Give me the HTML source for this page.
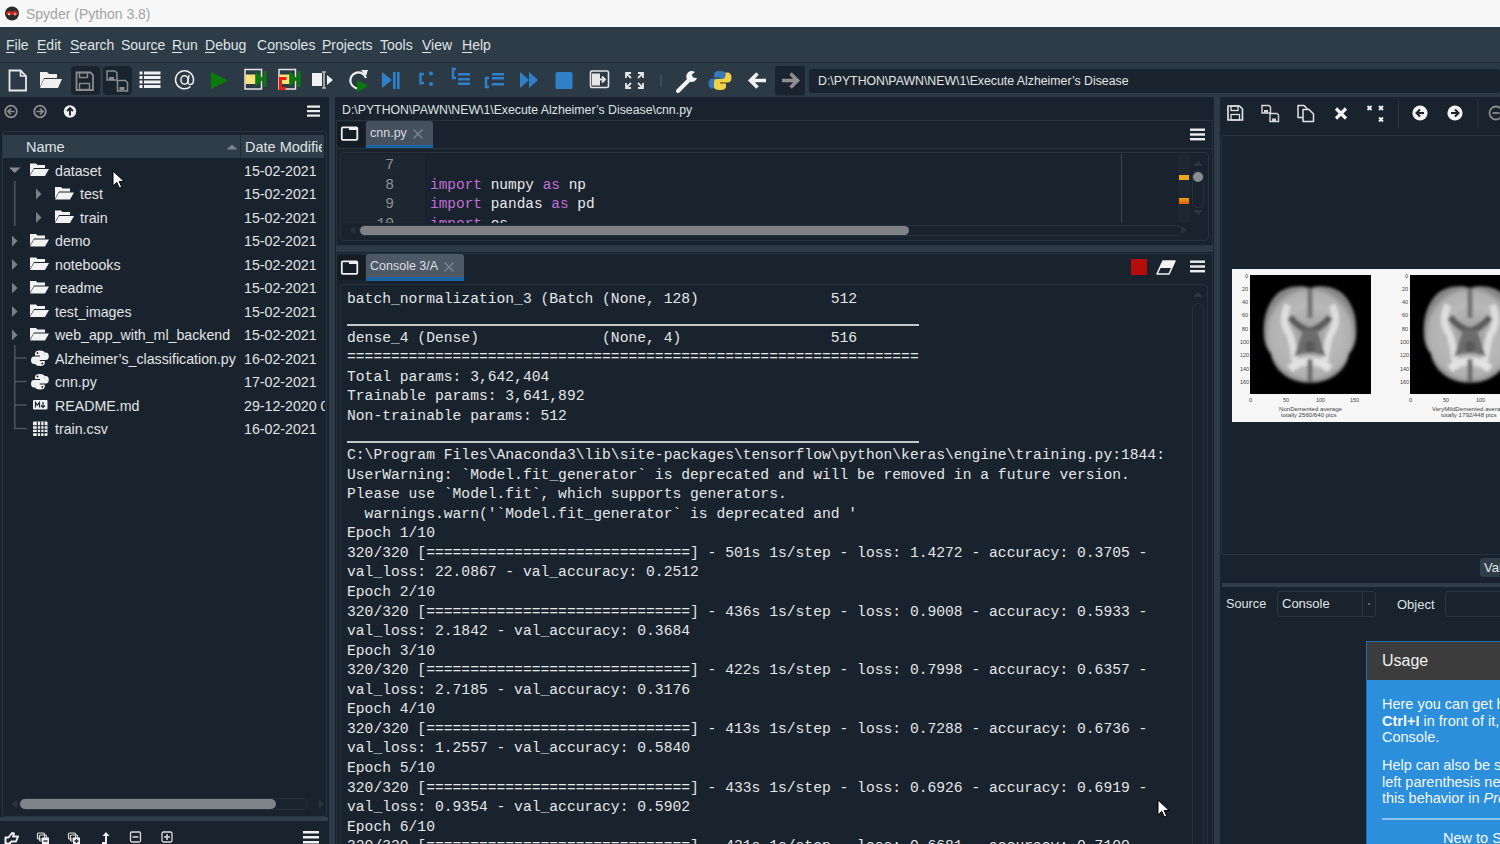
<!DOCTYPE html>
<html><head><meta charset="utf-8">
<style>
*{margin:0;padding:0;box-sizing:border-box}
html,body{width:1500px;height:844px;overflow:hidden;background:#19232d;font-family:"Liberation Sans",sans-serif}
.a{position:absolute}
#title{left:0;top:0;width:1500px;height:27px;background:#f7f7f7}
#title span{position:absolute;left:26px;top:6px;font-size:14px;color:#a4a4a4}
#menu{left:0;top:27px;width:1500px;height:35px;background:#2e3c47}
#menu span{position:absolute;top:10px;font-size:14px;color:#dfe3e6}
#menu u{text-decoration:underline;text-decoration-thickness:1px;text-underline-offset:2px}
#tool{left:0;top:62px;width:1500px;height:35px;background:#2c3a45;border-top:1px solid #222d36}
.mono{font-family:"Liberation Mono",monospace}
#console{left:347px;top:289.5px;font-size:14.66px;line-height:19.556px;color:#e4e6e8;white-space:pre}
</style></head><body>
<div id="title" class="a"><svg class="a" style="left:4px;top:5px" width="17" height="17"><circle cx="8" cy="8.5" r="7" fill="#2a2a2a"/><path d="M1.5 8.5q3-4 6.5-1.5q3.5-2.5 6.5 1.5q-3 3-6.5 1q-3.5 2-6.5-1z" fill="#d0281e"/><circle cx="11" cy="9.3" r="1.2" fill="#f09a90"/><circle cx="5" cy="9.3" r="1" fill="#eee"/></svg><span>Spyder (Python 3.8)</span></div>
<div id="menu" class="a">
<span style="left:6px"><u>F</u>ile</span>
<span style="left:37px"><u>E</u>dit</span>
<span style="left:70px"><u>S</u>earch</span>
<span style="left:121px">Sour<u>c</u>e</span>
<span style="left:172px"><u>R</u>un</span>
<span style="left:205px"><u>D</u>ebug</span>
<span style="left:257px">C<u>o</u>nsoles</span>
<span style="left:322px"><u>P</u>rojects</span>
<span style="left:380px"><u>T</u>ools</span>
<span style="left:422px"><u>V</u>iew</span>
<span style="left:462px"><u>H</u>elp</span>
</div>
<div id="tool" class="a">
<svg class="a" style="left:0;top:-1px" width="840" height="36" viewBox="0 62 840 36">
<!-- new file -->
<path d="M9.5 70.5h11l5.5 5.5v14.5h-16.5z" fill="none" stroke="#e8e8e8" stroke-width="1.8"/>
<path d="M20.5 70.5v5.5h5.5" fill="none" stroke="#e8e8e8" stroke-width="1.6"/>
<!-- open folder -->
<path d="M40 72h7l2 2h8v4h-13l-4 9z" fill="#f0f0f0"/>
<path d="M44 79h18l-4 9h-18z" fill="#f0f0f0"/>
<!-- save (disabled box) -->
<rect x="71" y="66" width="29" height="29" rx="4" fill="#1a242e"/>
<path d="M76.5 72.5h14l2.5 2.5v15h-16.5z" fill="none" stroke="#8c8c8c" stroke-width="1.8"/>
<rect x="79.5" y="72.5" width="8" height="5" fill="none" stroke="#8c8c8c" stroke-width="1.4"/>
<rect x="79.5" y="83.5" width="10" height="6" fill="none" stroke="#8c8c8c" stroke-width="1.4"/>
<!-- save all -->
<rect x="103" y="66" width="29" height="29" rx="4" fill="#1a242e"/>
<path d="M107 71h8l2 2v7h-10z" fill="none" stroke="#8c8c8c" stroke-width="1.5"/>
<rect x="109" y="77" width="5" height="3" fill="#8c8c8c"/>
<path d="M117.5 80.5h8l2 2v8.5h-10z" fill="none" stroke="#8c8c8c" stroke-width="1.5"/>
<rect x="119.5" y="87" width="5" height="3" fill="#8c8c8c"/>
<!-- list -->
<g fill="#f2f2f2"><rect x="139.5" y="71.5" width="3" height="3"/><rect x="144" y="71.5" width="16.5" height="3"/>
<rect x="139.5" y="76" width="3" height="3"/><rect x="144" y="76" width="16.5" height="3"/>
<rect x="139.5" y="80.5" width="3" height="3"/><rect x="144" y="80.5" width="16.5" height="3"/>
<rect x="139.5" y="85" width="3" height="3"/><rect x="144" y="85" width="16.5" height="3"/></g>
<!-- @ -->
<g fill="none" stroke="#eeeeee" stroke-width="1.5"><path d="M190.5 86.5a9 9 0 1 1 3-6.5c0 3-1.5 4.5-3.3 4.5s-2.5-1.2-2.2-3l1-6.5"/><ellipse cx="184.5" cy="80" rx="3.6" ry="4.2"/></g>
<!-- run -->
<path d="M211 72l17 8.5-17 8.5z" fill="#0a7a0a"/>
<!-- run cell -->
<rect x="245" y="69.5" width="16.5" height="19.5" fill="none" stroke="#e6e6e6" stroke-width="1.5"/>
<rect x="245.5" y="74.5" width="10" height="9.5" fill="#f7e27c"/>
<path d="M255.5 71l8 8-8 8z" fill="#0a7a0a"/><rect x="263.5" y="71" width="3" height="16" fill="#0a7a0a"/>
<!-- run cell advance -->
<rect x="279" y="69.5" width="16.5" height="19.5" fill="none" stroke="#e6e6e6" stroke-width="1.5"/>
<rect x="279.5" y="74.5" width="10" height="9.5" fill="#f7e27c"/>
<path d="M289.5 71l8 8-8 8z" fill="#0a7a0a"/><rect x="297.5" y="71" width="3" height="16" fill="#0a7a0a"/>
<path d="M286.5 78.5h-6v10h5" fill="none" stroke="#f01a10" stroke-width="3"/>
<!-- run selection -->
<rect x="312" y="73" width="10" height="13" fill="#f0f0f0"/>
<path d="M322 72h4M324 72v16M322 88h4" stroke="#bdbdbd" stroke-width="1.6" fill="none"/>
<path d="M327 75l6 5-6 5z" fill="#f0f0f0"/>
<!-- rerun -->
<path d="M366 78a8 8 0 1 0-5 10" fill="none" stroke="#f0f0f0" stroke-width="2.2"/>
<path d="M361 70l7 0-2 6z" fill="#f0f0f0"/>
<path d="M357 80l11 6-11 6z" fill="#0a7a0a"/>
<!-- debug -->
<path d="M382 72l10 8-10 8z" fill="#2f80c8"/><rect x="393" y="72" width="2.6" height="17" fill="#2f80c8"/><rect x="397" y="72" width="2.6" height="17" fill="#2f80c8"/>
<!-- step -->
<path d="M424 74h-3.5v9h3.5" fill="none" stroke="#2f80c8" stroke-width="2.5"/>
<circle cx="431" cy="73.5" r="2" fill="#2f80c8"/><circle cx="431" cy="84" r="2" fill="#2f80c8"/>
<!-- step into -->
<path d="M456 69h-3v9h3" fill="none" stroke="#2f80c8" stroke-width="2.5"/>
<g fill="#2f80c8"><rect x="458" y="73" width="12" height="2.5"/><rect x="458" y="78" width="12" height="2.5"/><rect x="458" y="82.5" width="12" height="2.5"/></g>
<!-- step return -->
<path d="M489 78h-3v9h3" fill="none" stroke="#2f80c8" stroke-width="2.5"/>
<g fill="#2f80c8"><rect x="492" y="73" width="12" height="2.5"/><rect x="492" y="77" width="12" height="2.5"/><rect x="492" y="83" width="12" height="2.5"/></g>
<!-- continue -->
<path d="M520 72l9 8-9 8z" fill="#2f80c8"/><path d="M529 72l9 8-9 8z" fill="#2f80c8"/>
<!-- stop -->
<rect x="555.5" y="72" width="17" height="17" rx="1.5" fill="#2f80c8"/>
<!-- maximize -->
<rect x="590.5" y="71" width="18" height="16.5" rx="1.5" fill="none" stroke="#e6e6e6" stroke-width="1.6"/>
<rect x="592" y="73.5" width="8" height="12" fill="#e6e6e6"/>
<path d="M598 79.5h7M602 76.5l3 3-3 3" stroke="#e6e6e6" stroke-width="1.8" fill="none"/>
<!-- fullscreen -->
<path d="M626 78v-5h5M626 73l5 5M643 78v-5h-5M643 73l-5 5M626 83v5h5M626 88l5-5M643 83v5h-5M643 88l-5-5" stroke="#e6e6e6" stroke-width="1.8" fill="none"/>
<!-- separator -->
<rect x="660.5" y="75" width="1" height="11" fill="#56636d"/>
<!-- wrench -->
<path d="M678 91l11-11" stroke="#f2f2f2" stroke-width="4" stroke-linecap="round"/>
<path d="M695 72a5.5 5.5 0 1 0 2 6l-4-0.5-1.2-3z" fill="#f2f2f2"/>
<!-- python -->
<path d="M719.5 71c-4 0-5.5 1.5-5.5 4v2.5h6v1h-7.5c-2.5 0-4 2-4 5s1.5 5 4 5h2v-3c0-2 1.5-3.5 3.5-3.5h5c2 0 3-1 3-3v-4.5c0-2.5-2-3.5-6.5-3.5z" fill="#3a78b5"/>
<path d="M720.5 90c4 0 5.5-1.5 5.5-4v-2.5h-6v-1h7.5c2.5 0 4-2 4-5s-1.5-5-4-5h-2v3c0 2-1.5 3.5-3.5 3.5h-5c-2 0-3 1-3 3v4.5c0 2.5 2 3.5 6.5 3.5z" fill="#f4d045"/>
<!-- back arrow -->
<path d="M766 80.5h-13M757.5 73.5l-7 7 7 7" stroke="#f2f2f2" stroke-width="3.6" fill="none" stroke-linejoin="miter"/>
<!-- forward disabled -->
<rect x="775" y="66" width="30" height="29.5" rx="3" fill="#1a242e"/>
<path d="M782 80.5h13M790.5 73.5l7 7-7 7" stroke="#8e8e8e" stroke-width="3.6" fill="none"/>
</svg>
<div class="a" style="left:809px;top:6px;width:691px;height:24px;background:#1a242e;border-radius:3px"></div>
<span class="a" style="left:818px;top:10.5px;font-size:12.3px;color:#e2e4e6">D:\PYTHON\PAWN\NEW\1\Execute Alzheimer’s Disease</span>
</div>


<!-- LEFT PANE -->
<svg class="a" style="left:0;top:97px" width="336" height="40" viewBox="0 97 336 40">
<circle cx="11" cy="111.5" r="5.8" fill="none" stroke="#8f8f8f" stroke-width="1.8"/>
<path d="M14.5 111.5h-6M11 108.5l-3 3 3 3" stroke="#8f8f8f" stroke-width="1.7" fill="none"/>
<circle cx="40" cy="111.5" r="5.8" fill="none" stroke="#8f8f8f" stroke-width="1.8"/>
<path d="M36.5 111.5h6M40 108.5l3 3-3 3" stroke="#8f8f8f" stroke-width="1.7" fill="none"/>
<circle cx="70" cy="111.5" r="6.2" fill="#f0f0f0"/>
<path d="M70 115.5v-7M67 111l3-3 3 3" stroke="#19232d" stroke-width="1.9" fill="none"/>
<g fill="#eeeeee"><rect x="307" y="105.5" width="13" height="2.2"/><rect x="307" y="110" width="13" height="2.2"/><rect x="307" y="114.5" width="13" height="2.2"/></g>
</svg>
<div class="a" style="left:2px;top:131px;width:325px;height:686px;border:1px solid #2a3540;border-radius:3px"></div>
<div class="a" style="left:3px;top:135px;width:321px;height:23px;background:#2f3d48"></div>
<div class="a" style="left:240px;top:135px;width:1px;height:23px;background:#1f2a33"></div>
<span class="a" style="left:26px;top:139px;font-size:14.5px;color:#dfe2e5">Name</span>
<svg class="a" style="left:226px;top:144px" width="12" height="6"><path d="M0.5 5.5L6 0.5 11.5 5.5z" fill="#7d858b"/></svg>
<div class="a" style="left:245px;top:139px;width:77px;overflow:hidden;white-space:nowrap;font-size:14.5px;color:#dfe2e5">Date Modified</div>
<div id="tree" class="a" style="left:0;top:0">
<svg class="a" style="left:0;top:158px" width="80" height="285" viewBox="0 158 80 285">
<path d="M9 167.5h11.5l-5.75 5.5z" fill="#8a8a8a"/>
<path d="M36 188.5v11l5.5-5.5z" fill="#7a7f84"/>
<path d="M36 212v11l5.5-5.5z" fill="#7a7f84"/>
<path d="M12 235.5v11l5.5-5.5z" fill="#7a7f84"/>
<path d="M12 259v11l5.5-5.5z" fill="#7a7f84"/>
<path d="M12 282.5v11l5.5-5.5z" fill="#7a7f84"/>
<path d="M12 306v11l5.5-5.5z" fill="#7a7f84"/>
<path d="M12 329.5v11l5.5-5.5z" fill="#7a7f84"/>
<rect x="14" y="181" width="1.5" height="45" fill="#4b5660"/>
<path d="M14.8 345v84M14.8 358h12M14.8 381.5h12M14.8 405h12M14.8 428.5h12" stroke="#4b5660" stroke-width="1.5" fill="none"/>
<defs>
<g id="fold"><path d="M0 1.5h6l1.5 1.5h7.5v3h-11l-4 7z" fill="#f2f2f2"/><path d="M4 7h15l-4 7h-15z" fill="#f2f2f2"/></g>
<g id="py"><path d="M7.5 0c-3 0-4.5 1-4.5 3v2h5v1h-6c-2 0-3 1.5-3 3.8s1 3.8 3 3.8h1.5v-2.3c0-1.7 1.2-2.8 2.8-2.8h4c1.6 0 2.4-.8 2.4-2.4v-3.3c0-1.8-1.6-2.8-5.2-2.8z" fill="#f0f0f0"/><path d="M8.3 15.5c3 0 4.5-1 4.5-3v-2h-5v-1h6c2 0 3-1.5 3-3.8s-1-3.8-3-3.8h-1.5v2.3c0 1.7-1.2 2.8-2.8 2.8h-4c-1.6 0-2.4.8-2.4 2.4v3.3c0 1.8 1.6 2.8 5.2 2.8z" fill="#f0f0f0"/><circle cx="5.5" cy="2.5" r=".9" fill="#19232d"/><circle cx="10.3" cy="13" r=".9" fill="#19232d"/></g>
</defs>
<use href="#fold" x="30" y="162"/>
<use href="#fold" x="55" y="185.5"/>
<use href="#fold" x="55" y="209"/>
<use href="#fold" x="30" y="232.5"/>
<use href="#fold" x="30" y="256"/>
<use href="#fold" x="30" y="279.5"/>
<use href="#fold" x="30" y="303"/>
<use href="#fold" x="30" y="326.5"/>
<use href="#py" x="32" y="350.5"/>
<use href="#py" x="32" y="374"/>
<rect x="33" y="400" width="14.5" height="9.5" rx="1" fill="#f0f0f0"/>
<path d="M35.5 407.5v-5l2 2.5 2-2.5v5M43 402v5.5M41 405.5l2 2 2-2" stroke="#19232d" stroke-width="1.2" fill="none"/>
<rect x="33" y="421.5" width="14.5" height="14.5" rx="1" fill="#f0f0f0"/>
<path d="M33 425.8h14.5M33 429.2h14.5M33 432.6h14.5M37.3 421.5v14.5M40.7 421.5v14.5M44.1 421.5v14.5" stroke="#19232d" stroke-width="1.1"/>
</svg>
</div>
<div class="a" style="left:0;top:0.7px;font-size:14.2px;color:#e1e3e5;white-space:nowrap">
<span class="a" style="left:55px;top:162px">dataset</span>
<span class="a" style="left:80px;top:185.5px">test</span>
<span class="a" style="left:80px;top:209px">train</span>
<span class="a" style="left:55px;top:232.5px">demo</span>
<span class="a" style="left:55px;top:256px">notebooks</span>
<span class="a" style="left:55px;top:279.5px">readme</span>
<span class="a" style="left:55px;top:303px">test_images</span>
<span class="a" style="left:55px;top:326.5px">web_app_with_ml_backend</span>
<span class="a" style="left:55px;top:350px">Alzheimer’s_classification.py</span>
<span class="a" style="left:55px;top:373.5px">cnn.py</span>
<span class="a" style="left:55px;top:397px">README.md</span>
<span class="a" style="left:55px;top:420.5px">train.csv</span>
<span class="a" style="left:244px;top:162px">15-02-2021</span>
<span class="a" style="left:244px;top:185.5px">15-02-2021</span>
<span class="a" style="left:244px;top:209px">15-02-2021</span>
<span class="a" style="left:244px;top:232.5px">15-02-2021</span>
<span class="a" style="left:244px;top:256px">15-02-2021</span>
<span class="a" style="left:244px;top:279.5px">15-02-2021</span>
<span class="a" style="left:244px;top:303px">15-02-2021</span>
<span class="a" style="left:244px;top:326.5px">15-02-2021</span>
<span class="a" style="left:244px;top:350px">16-02-2021</span>
<span class="a" style="left:244px;top:373.5px">17-02-2021</span>
<span class="a" style="left:244px;top:397px;width:81px;overflow:hidden">29-12-2020 0</span>
<span class="a" style="left:244px;top:420.5px">16-02-2021</span>
</div>
<!-- left hscroll -->
<div class="a" style="left:19px;top:798px;width:289px;height:12px;border:1px solid #26313b;border-radius:6px"></div>
<div class="a" style="left:20px;top:799px;width:256px;height:10px;background:#7f8488;border-radius:5px"></div>
<svg class="a" style="left:8px;top:798px" width="320" height="12"><path d="M4 6l5-4v8z" fill="#2b3640"/><path d="M311 2l5 4-5 4z" fill="#2b3640"/></svg>
<!-- left bottom bar -->
<div class="a" style="left:0;top:817px;width:328px;height:4px;background:#2f3e49"></div>
<svg class="a" style="left:0;top:821px" width="336" height="23" viewBox="0 821 336 23">
<path d="M5.5 837.5h3l3.5-4.5 2 .5-1 3h5l-2 5h-4.5l-2 2h-4z" fill="none" stroke="#eeeeee" stroke-width="2" stroke-linejoin="round"/>
<g fill="none" stroke="#dddddd" stroke-width="1.2"><rect x="37.5" y="833" width="7" height="6" rx="1"/><rect x="39.5" y="835" width="7" height="6" rx="1"/></g><rect x="42" y="837.5" width="7" height="7" fill="#eeeeee"/><path d="M43.5 841h4" stroke="#19232d" stroke-width="1.3"/>
<g fill="none" stroke="#dddddd" stroke-width="1.2"><rect x="68.5" y="833" width="7" height="6" rx="1"/><rect x="70.5" y="835" width="7" height="6" rx="1"/></g><rect x="73" y="837.5" width="7" height="7" fill="#eeeeee"/><path d="M74.5 841h4M76.5 839v4" stroke="#19232d" stroke-width="1.3"/>
<path d="M102 843h4v-8" stroke="#eeeeee" stroke-width="2" fill="none"/><path d="M102.5 836l3.5-4 3.5 4z" fill="#eeeeee"/>
<rect x="130.5" y="832" width="10" height="10" rx="1.5" fill="none" stroke="#dddddd" stroke-width="1.3"/><path d="M132.5 837h6" stroke="#dddddd" stroke-width="1.5"/>
<rect x="162" y="832" width="10" height="10" rx="1.5" fill="none" stroke="#dddddd" stroke-width="1.3"/><path d="M164 837h6M167 834v6" stroke="#dddddd" stroke-width="1.5"/>
<g fill="#f0f0f0"><rect x="303" y="831" width="16" height="2.5"/><rect x="303" y="836" width="16" height="2.5"/><rect x="303" y="841" width="16" height="2.5"/></g>
</svg>
<!-- splitter -->
<div class="a" style="left:329px;top:97px;width:6px;height:747px;background:#2d3b46"></div>

<!-- EDITOR PANE -->
<span class="a" style="left:342px;top:103px;font-size:12.3px;color:#dfe2e5;white-space:nowrap">D:\PYTHON\PAWN\NEW\1\Execute Alzheimer’s Disease\cnn.py</span>
<div class="a" style="left:336px;top:120px;width:877px;height:126px;border:1px solid #27323c"></div>
<div class="a" style="left:336px;top:147.5px;width:877px;height:1px;background:#27323c"></div>
<div class="a" style="left:337px;top:122px;width:28px;height:25px;background:#141c24;border-radius:2px"></div>
<svg class="a" style="left:340px;top:125px" width="20" height="18"><rect x="1.8" y="2.3" width="15.5" height="12.5" rx="1" fill="none" stroke="#eeeeee" stroke-width="1.8"/><rect x="9" y="2" width="8" height="3" fill="#eeeeee"/></svg>
<div class="a" style="left:366px;top:121px;width:67px;height:27px;background:#45515e;border-radius:3px 3px 0 0;border-bottom:3px solid #1a64a5"></div>
<span class="a" style="left:370px;top:126px;font-size:12.5px;color:#d8dbde">cnn.py</span>
<svg class="a" style="left:412px;top:128px" width="12" height="12"><path d="M1.5 1.5l9 9M10.5 1.5l-9 9" stroke="#7f8993" stroke-width="1.2"/></svg>
<svg class="a" style="left:1188px;top:126.7px" width="20" height="16"><g fill="#eeeeee"><rect x="2" y="1.5" width="15" height="2.4"/><rect x="2" y="6.3" width="15" height="2.4"/><rect x="2" y="11" width="15" height="2.4"/></g></svg>
<div class="a" style="left:340px;top:152px;width:869px;height:89px;border:1px solid #27323c;border-radius:4px"></div>
<div class="a" style="left:343px;top:155px;width:82px;height:68px;background:#1d2731"></div>
<div class="a mono" style="left:343px;top:156px;width:51px;text-align:right;font-size:14.66px;line-height:19.5px;color:#8d9296;white-space:pre;height:67px;overflow:hidden">7
8
9
10</div>
<div class="a mono" style="left:430px;top:156px;font-size:14.45px;line-height:19.5px;color:#e8eaec;white-space:pre;height:67px;overflow:hidden">
<span style="color:#c26fd8">import</span> numpy <span style="color:#c26fd8">as</span> np
<span style="color:#c26fd8">import</span> pandas <span style="color:#c26fd8">as</span> pd
<span style="color:#c26fd8">import</span> os</div>
<div class="a" style="left:343px;top:223px;width:840px;height:14px;background:#19232d"></div>
<svg class="a" style="left:348px;top:224px" width="10" height="12"><path d="M2 6l5-4v8z" fill="#27323c"/></svg>
<div class="a" style="left:359px;top:225px;width:823px;height:11px;border:1px solid #27323c;border-radius:5px"></div>
<div class="a" style="left:360px;top:226px;width:549px;height:9px;background:#7f8286;border-radius:4.5px"></div>
<svg class="a" style="left:1180px;top:224px" width="10" height="12"><path d="M2 2l5 4-5 4z" fill="#27323c"/></svg>
<div class="a" style="left:1120.5px;top:154px;width:1px;height:69px;background:#3a4650"></div>
<div class="a" style="left:1178px;top:155px;width:12px;height:67px;background:#1e2833"></div>
<div class="a" style="left:1179px;top:175px;width:10px;height:5px;background:#f0a81c"></div>
<div class="a" style="left:1179px;top:198px;width:10px;height:6px;background:linear-gradient(#f0a010,#e05a10)"></div>
<div class="a" style="left:1192px;top:170px;width:12px;height:38px;border:1px solid #27323c;border-radius:6px"></div>
<div class="a" style="left:1193px;top:172px;width:10px;height:10px;background:#8a8c8e;border-radius:50%"></div>
<svg class="a" style="left:1192px;top:159px" width="12" height="60"><path d="M1 7l5-5 5 5z" fill="#2a353f"/><path d="M1 51l5 5 5-5z" fill="#2a353f"/></svg>

<!-- splitter between editor & console -->
<div class="a" style="left:336px;top:246px;width:877px;height:6px;background:#2d3b46"></div>
<!-- CONSOLE PANE -->
<div class="a" style="left:336px;top:253px;width:877px;height:700px;border:1px solid #27323c"></div>
<div class="a" style="left:337px;top:255px;width:28px;height:25px;background:#141c24;border-radius:2px"></div>
<svg class="a" style="left:340px;top:258px" width="20" height="18"><rect x="1.8" y="3.3" width="15.5" height="12.5" rx="1" fill="none" stroke="#eeeeee" stroke-width="1.8"/><rect x="9" y="3" width="8" height="3" fill="#eeeeee"/></svg>
<div class="a" style="left:366px;top:254px;width:98px;height:27px;background:#4e5966;border-radius:3px 3px 0 0;border-bottom:4px solid #1a64a5"></div>
<span class="a" style="left:370px;top:259px;font-size:12.5px;color:#dcdfe2">Console 3/A</span>
<svg class="a" style="left:443px;top:261px" width="12" height="12"><path d="M1.5 1.5l9 9M10.5 1.5l-9 9" stroke="#7f8993" stroke-width="1.2"/></svg>
<div class="a" style="left:1131px;top:259px;width:16px;height:16px;background:#b50e0a"></div>
<svg class="a" style="left:1156px;top:258px" width="22" height="18"><path d="M7 3h12l-6 13h-12z" fill="none" stroke="#f2f2f2" stroke-width="1.6" stroke-linejoin="round"/><path d="M7 3h12l-3.2 7h-12z" fill="#f2f2f2"/></svg>
<svg class="a" style="left:1188px;top:259px" width="20" height="16"><g fill="#eeeeee"><rect x="2" y="1.5" width="15" height="2.4"/><rect x="2" y="6.3" width="15" height="2.4"/><rect x="2" y="11" width="15" height="2.4"/></g></svg>
<div class="a" style="left:340px;top:284px;width:868px;height:600px;border:1px solid #27323c;border-radius:4px"></div>
<svg class="a" style="left:1192px;top:290px" width="12" height="12"><path d="M1 7l5-5 5 5z" fill="#2a353f"/></svg>
<div class="a" style="left:1192px;top:303px;width:12px;height:560px;border:1px solid #27323c;border-radius:6px"></div>
<!-- right splitter -->
<div class="a" style="left:1214px;top:97px;width:6px;height:747px;background:#2d3b46"></div>

<!-- RIGHT PANE -->
<svg class="a" style="left:1220px;top:97px" width="280" height="38" viewBox="1220 97 280 38">
<!-- save -->
<path d="M1228 106h11.5l3 3v11h-14.5z" fill="none" stroke="#e2e2e2" stroke-width="1.7"/>
<rect x="1231" y="106" width="7" height="4.5" fill="none" stroke="#e2e2e2" stroke-width="1.3"/>
<rect x="1231" y="114.5" width="8.5" height="5.5" fill="none" stroke="#e2e2e2" stroke-width="1.3"/>
<!-- save all -->
<path d="M1262 105.5h7l1.5 1.5v6h-8.5z" fill="none" stroke="#d8d8d8" stroke-width="1.4"/>
<rect x="1264" y="110" width="4" height="2.5" fill="#d8d8d8"/>
<path d="M1270 113.5h7l1.5 1.5v6.5h-8.5z" fill="none" stroke="#d8d8d8" stroke-width="1.4"/>
<rect x="1272" y="118.5" width="4" height="2.5" fill="#d8d8d8"/>
<!-- copy -->
<path d="M1298 105.5h6l3 3v9h-9z" fill="none" stroke="#e2e2e2" stroke-width="1.5" stroke-linejoin="round"/>
<path d="M1303 109.5h6l4.5 4.5v7.5h-10.5z" fill="#19232d" stroke="#e2e2e2" stroke-width="1.5" stroke-linejoin="round"/>
<!-- x -->
<path d="M1336 108.5l10 10M1346 108.5l-10 10" stroke="#f2f2f2" stroke-width="3.2"/>
<!-- xxx -->
<path d="M1367.5 106l4 4M1371.5 106l-4 4M1379 106l4 4M1383 106l-4 4M1379 117.5l4 4M1383 117.5l-4 4" stroke="#f2f2f2" stroke-width="1.8"/>
<rect x="1398" y="99" width="1" height="29" fill="#2b3640"/>
<!-- circles -->
<circle cx="1420" cy="113" r="7.6" fill="#f2f2f2"/>
<path d="M1424 113h-7.5M1420 109.5l-3.5 3.5 3.5 3.5" stroke="#19232d" stroke-width="2" fill="none"/>
<circle cx="1455" cy="113" r="7.6" fill="#f2f2f2"/>
<path d="M1451 113h7.5M1455 109.5l3.5 3.5-3.5 3.5" stroke="#19232d" stroke-width="2" fill="none"/>
<rect x="1477.5" y="99" width="1" height="29" fill="#2b3640"/>
<circle cx="1496" cy="113" r="6.5" fill="none" stroke="#8a8a8a" stroke-width="1.8"/>
<path d="M1492.5 113h7" stroke="#8a8a8a" stroke-width="1.8"/>
</svg>
<div class="a" style="left:1221px;top:135px;width:290px;height:420px;border:1px solid #27323c;border-radius:3px"></div>
<!-- thumbnails -->
<svg class="a" style="left:1232px;top:269px" width="268" height="153" viewBox="1232 269 268 153">
<defs>
<radialGradient id="bg1" cx="0.5" cy="0.5" r="0.5">
<stop offset="0" stop-color="#9c9c9c"/><stop offset="0.6" stop-color="#b8b8b8"/><stop offset="0.88" stop-color="#b0b0b0"/><stop offset="1" stop-color="#858585"/>
</radialGradient>
<filter id="bl" x="-10%" y="-10%" width="120%" height="120%"><feGaussianBlur stdDeviation="1.6"/></filter>
<g id="brain">
<rect x="0" y="0" width="121" height="119" fill="#000"/>
<g filter="url(#bl)">
<path d="M60 13C50 9 30 11 22 25C14 37 13 50 14 62C15 71 18 75 21 79C24 96 40 108 60 108C80 108 96 96 99 79C102 75 105 71 106 62C107 50 106 37 98 25C90 11 70 9 60 13Z" fill="url(#bg1)"/>
<path d="M38 30Q30 46 40 60Q44 74 46 92M82 30Q90 46 80 60Q76 74 74 92" stroke="#dedede" stroke-width="7" fill="none"/>
<path d="M40 94Q60 78 80 94" stroke="#e2e2e2" stroke-width="8" fill="none"/>
<path d="M40 42Q50 54 60 56Q70 54 80 42" stroke="#5c5c5c" stroke-width="7" fill="none"/>
<path d="M53 55h14l9 27q-16-8-32 0z" fill="#6c6c6c"/>
<ellipse cx="60" cy="72" rx="5" ry="6" fill="#585858"/>
<rect x="57.5" y="13" width="5" height="30" fill="#707070"/>
<rect x="57.5" y="84" width="5" height="24" fill="#6a6a6a"/>
</g>
</g>
</defs>
<rect x="1232" y="269" width="268" height="153" fill="#f6f6f6"/>
<use href="#brain" x="1250" y="275"/>
<use href="#brain" x="1410" y="275"/>
<g font-family="Liberation Sans" font-size="5.5" fill="#444">
<text x="1245" y="278">0</text><text x="1242" y="291">20</text><text x="1242" y="304">40</text><text x="1242" y="317">60</text><text x="1242" y="331">80</text><text x="1240" y="344">100</text><text x="1240" y="357">120</text><text x="1240" y="371">140</text><text x="1240" y="384">160</text>
<text x="1249" y="402">0</text><text x="1283" y="402">50</text><text x="1316" y="402">100</text><text x="1350" y="402">150</text>
<text x="1279" y="410.5" font-size="6.1">NonDemented average</text><text x="1281" y="417" font-size="6.1">totally 2560/640 pics</text>
<text x="1405" y="278">0</text><text x="1402" y="291">20</text><text x="1402" y="304">40</text><text x="1402" y="317">60</text><text x="1402" y="331">80</text><text x="1400" y="344">100</text><text x="1400" y="357">120</text><text x="1400" y="371">140</text><text x="1400" y="384">160</text>
<text x="1409" y="402">0</text><text x="1443" y="402">50</text><text x="1476" y="402">100</text>
<text x="1432" y="410.5" font-size="6.1">VeryMildDemented average</text><text x="1441" y="417" font-size="6.1">totally 1792/448 pics</text>
</g>
</svg>
<div class="a" style="left:1480px;top:558px;width:30px;height:19px;background:#2f3d48;border-radius:3px"></div>
<span class="a" style="left:1484px;top:560px;font-size:13px;color:#e0e3e6">Var</span>
<div class="a" style="left:1222px;top:583px;width:278px;height:4px;background:#2f3d48"></div>
<span class="a" style="left:1226px;top:597px;font-size:12.7px;color:#dfe2e5">Source</span>
<div class="a" style="left:1277px;top:591px;width:99px;height:26px;border:1px solid #2a3540;border-radius:3px"></div>
<div class="a" style="left:1362px;top:592px;width:1px;height:24px;background:#2a3540"></div>
<div class="a" style="left:1368px;top:603px;width:2px;height:2px;background:#55606a"></div>
<span class="a" style="left:1282px;top:596px;font-size:13px;color:#e4e6e8">Console</span>
<span class="a" style="left:1397px;top:597px;font-size:13px;color:#dfe2e5">Object</span>
<div class="a" style="left:1445px;top:591px;width:80px;height:26px;border:1px solid #2a3540;border-radius:3px"></div>
<!-- usage -->
<div class="a" style="left:1366px;top:641px;width:140px;height:210px;background:#2b8fdb;border:1px solid #1c6fb0"></div>
<div class="a" style="left:1367px;top:642px;width:140px;height:38px;background:#3c3c3c"></div>
<span class="a" style="left:1382px;top:652px;font-size:16px;color:#f0f0f0">Usage</span>
<div class="a" style="left:1382px;top:696px;width:200px;font-size:14.5px;line-height:16.6px;color:#f4f8fc;white-space:nowrap">Here you can get help<br><b>Ctrl+I</b> in front of it, in<br>Console.</div>
<div class="a" style="left:1382px;top:757px;width:200px;font-size:14.5px;line-height:16.6px;color:#f4f8fc;white-space:nowrap">Help can also be shown<br>left parenthesis next to<br>this behavior in <i>Preferences</i></div>
<div class="a" style="left:1382px;top:818px;width:130px;height:2px;background:#8cc4ef"></div>
<span class="a" style="left:1443px;top:830px;font-size:14.5px;color:#f4f8fc;white-space:nowrap">New to Spyder?</span>

<div class="a" style="left:347px;top:323.5px;width:572px;height:2px;background:#c4c7ca"></div>
<div class="a" style="left:347px;top:440.5px;width:572px;height:2px;background:#c4c7ca"></div>
<div id="console" class="a mono">batch_normalization_3 (Batch (None, 128)               512       
                                                                 
dense_4 (Dense)              (None, 4)                 516       
=================================================================
Total params: 3,642,404
Trainable params: 3,641,892
Non-trainable params: 512
                                                                 
C:\Program Files\Anaconda3\lib\site-packages\tensorflow\python\keras\engine\training.py:1844:
UserWarning: `Model.fit_generator` is deprecated and will be removed in a future version.
Please use `Model.fit`, which supports generators.
  warnings.warn('`Model.fit_generator` is deprecated and '
Epoch 1/10
320/320 [==============================] - 501s 1s/step - loss: 1.4272 - accuracy: 0.3705 -
val_loss: 22.0867 - val_accuracy: 0.2512
Epoch 2/10
320/320 [==============================] - 436s 1s/step - loss: 0.9008 - accuracy: 0.5933 -
val_loss: 2.1842 - val_accuracy: 0.3684
Epoch 3/10
320/320 [==============================] - 422s 1s/step - loss: 0.7998 - accuracy: 0.6357 -
val_loss: 2.7185 - val_accuracy: 0.3176
Epoch 4/10
320/320 [==============================] - 413s 1s/step - loss: 0.7288 - accuracy: 0.6736 -
val_loss: 1.2557 - val_accuracy: 0.5840
Epoch 5/10
320/320 [==============================] - 433s 1s/step - loss: 0.6926 - accuracy: 0.6919 -
val_loss: 0.9354 - val_accuracy: 0.5902
Epoch 6/10
320/320 [==============================] - 421s 1s/step - loss: 0.6681 - accuracy: 0.7100 -</div>
<svg class="a" style="left:112px;top:170px" width="14" height="20"><path d="M1 1v15l3.8-3.6 2.6 5.6 2.3-1-2.5-5.5h5z" fill="#fff" stroke="#000" stroke-width="1"/></svg>
<svg class="a" style="left:1157px;top:799px" width="14" height="20"><path d="M1 1v15l3.8-3.6 2.6 5.6 2.3-1-2.5-5.5h5z" fill="#fff" stroke="#000" stroke-width="1"/></svg>
</body></html>
